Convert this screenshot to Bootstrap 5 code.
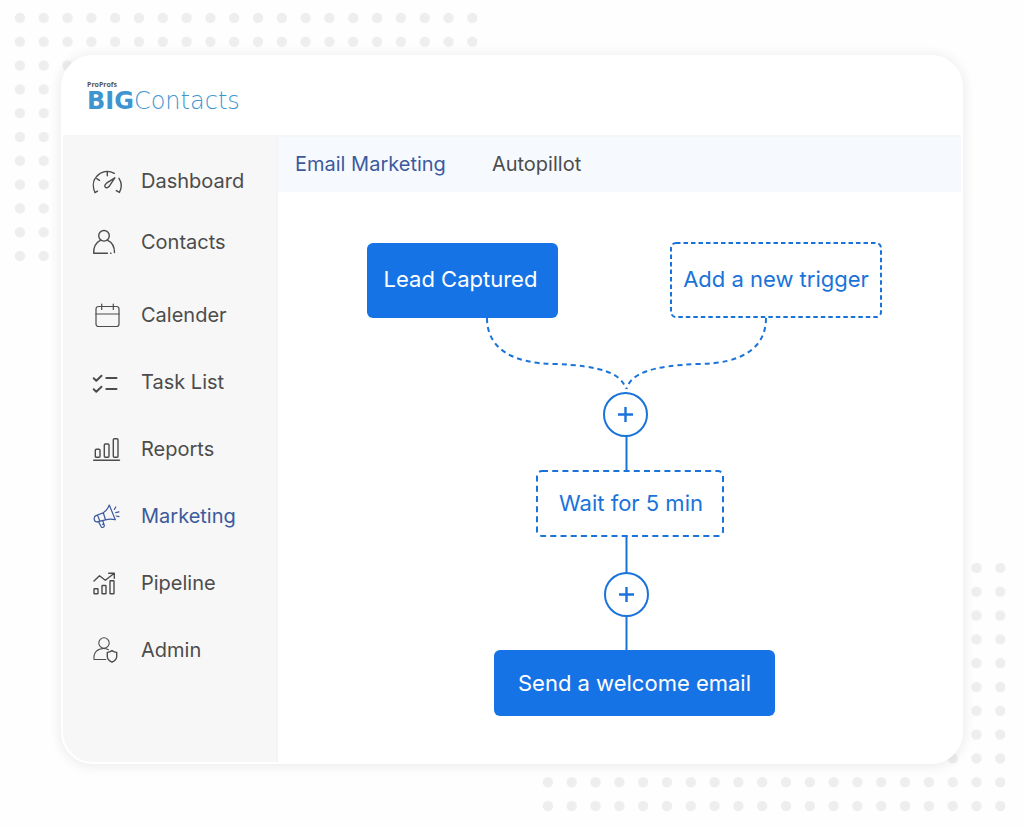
<!DOCTYPE html>
<html lang="en">
<head>
<meta charset="utf-8">
<meta name="viewport" content="width=device-width, initial-scale=1">
<title>BIGContacts</title>
<link href="https://cdn.jsdelivr.net/npm/bootstrap@5.3.0/dist/css/bootstrap.min.css" rel="stylesheet">
<style>
  body { font-family: Inter, "Liberation Sans", sans-serif; background: #fefefe; color: #4c4c4c; }
  .stage { padding: 55px 61px 64px; }
  .dot-grid { position: absolute; width: 476px; height: 262px; }
  .dots-start { top: 6px; left: 8px; }
  .dots-end { bottom: 10px; right: 12px; }
  .app-window { border: 2px solid #fff; border-radius: 32px; background: #fff; box-shadow: 0 1px 12px 2px rgba(0,0,0,.07); }
  .app-header { height: 80px; padding: 24px; border-bottom: 2px solid #f6f6f6; }
  .brand { color: #3f95cf; }
  .brand-owner { font: 700 7px/8px "Open Sans", sans-serif; color: #555; }
  .brand-name { font: 200 24px/24px "DejaVu Sans", sans-serif; }
  .brand-name b { font-weight: 700; }
  .sidebar { width: 215px; background: #f7f7f7; border-right: 2px solid #f4f4f4; padding: 14px 0 32px 28px; }
  .side-link { display: flex; align-items: center; gap: 18px; padding: 14px 0 15px; font-size: 20px; line-height: 32px; color: inherit; text-decoration: none; }
  .side-records { padding-top: 9px; }
  .side-records .side-link { padding: 17px 0 18px; }
  .side-link.active, .tab-link.active { color: #3c5a9c; }
  .side-link svg { width: 32px; height: 32px; flex: none; fill: none; stroke: currentColor; stroke-width: 1.4; stroke-linecap: round; stroke-linejoin: round; }
  .tab-strip { height: 55px; padding: 0 0 2px 17px; gap: 46px; background: #f6faff; }
  .tab-link { color: inherit; text-decoration: none; font-size: 20px; line-height: 30px; }
  .canvas { padding: 51px 0 45px 10px; }
  .flow { position: relative; width: 515px; height: 474px; color: #1a73d9; }
  .flow-lines { position: absolute; inset: 0; width: 100%; height: 100%; overflow: visible; fill: none; stroke: currentColor; stroke-width: 2; }
  .node { position: absolute; border: 0; padding: 0; background: transparent; color: inherit; font-size: 22px; line-height: 32px; white-space: nowrap; border-radius: 6px; }
  .node-solid { background: #1673e6; color: #fff; }
  .node-add { width: 45px; height: 45px; border: 2px solid; border-radius: 50%; display: grid; place-items: center; background: #fff; }
  .node-add svg { width: 17px; height: 17px; stroke: currentColor; stroke-width: 2.4; }
  .at-lead { left: 0; top: 0; width: 191px; height: 75px; padding: 0 4px 4px 0; }
  .at-trigger { left: 303px; top: 0; width: 212px; height: 75px; padding-bottom: 4px; }
  .at-add-first { left: 236px; top: 149px; }
  .at-wait { left: 170px; top: 227px; width: 188px; height: 66px; }
  .at-add-second { left: 237px; top: 329px; }
  .at-send { left: 127px; top: 407px; width: 281px; height: 66px; }
</style>
</head>
<body>
<div class="stage position-relative min-vh-100 d-flex">
  <svg class="dot-grid dots-start" viewBox="0 0 476 262" aria-hidden="true">
    <defs><pattern id="dots" width="23.81" height="23.81" patternUnits="userSpaceOnUse"><circle cx="11.9" cy="11.9" r="5.2" fill="#eee"/></pattern></defs>
    <rect width="476" height="262" fill="url(#dots)"/>
  </svg>
  <svg class="dot-grid dots-end" viewBox="0 0 476 262" aria-hidden="true"><rect width="476" height="262" fill="url(#dots)"/></svg>

  <div class="app-window position-relative flex-grow-1 d-flex flex-column overflow-hidden">
    <header class="app-header">
      <div class="brand">
        <div class="brand-owner">ProProfs</div>
        <div class="brand-name"><b>BIG</b>Contacts</div>
      </div>
    </header>
    <div class="d-flex flex-grow-1">
      <nav class="sidebar flex-shrink-0" aria-label="Main">
        <div>
          <a class="side-link" href="#"><svg viewBox="0 0 32 32" aria-hidden="true"><path d="M6.5 26.2 4 27.6C1.5 22 1.8 15.500 5.600 11.500C10 6.300 17 4.800 23.300 8.300M28 13.300C30.800 17.500 31 22.500 28.400 27.400L25.300 25.600M5.800 13.700l2.700 1.600M16.300 7v3.800M23.800 12.800 15.500 18.200C11.800 21.200 15 24.600 18 21.600Z"/></svg>Dashboard</a>
          <a class="side-link" href="#"><svg viewBox="0 0 32 32" aria-hidden="true"><circle cx="13" cy="9.800" r="5.300"/><path d="M9.300 14.300C5 16.500 2.400 20.500 2.700 27.300H16.500M19.700 27.300h.3M23.500 26.500C23.500 20.500 21.500 16.500 16.700 14.300"/></svg>Contacts</a>
        </div>
        <div class="side-records">
          <a class="side-link" href="#"><svg viewBox="0 0 32 32" aria-hidden="true"><g stroke-width="1.200"><rect x="5" y="7.500" width="23" height="20" rx="2.500"/><path d="M5 15H28M10.700 5v5.500M22.300 5v5.500"/></g></svg>Calender</a>
          <a class="side-link" href="#"><svg viewBox="0 0 32 32" aria-hidden="true"><path stroke-width="2" d="M2.700 12.200 5.300 14.700 10.500 9.700M2.700 23.200 5.300 25.700 10.500 20.700M15.300 12H25.500M15.300 23H25.500"/></svg>Task List</a>
          <a class="side-link" href="#"><svg viewBox="0 0 32 32" aria-hidden="true"><path d="M2.700 27.200H28.500"/><rect x="4.300" y="16.300" width="4.700" height="8" rx="1"/><rect x="13.300" y="11" width="4.700" height="13.300" rx="1"/><rect x="22.300" y="5.800" width="4.700" height="18.500" rx="1"/></svg>Reports</a>
          <a class="side-link active" aria-current="page" href="#"><svg viewBox="0 0 32 32" aria-hidden="true"><g stroke-width="1.200"><path d="M18.300 5 24.300 19.800C21 18.800 18 18.800 14.500 19.800L12.300 12.700C15 11 17 8.500 18.300 5ZM12.300 12.700 5 15.600C2 17 3 22 6 21.800L14.500 19.800M6.500 15.200 9 21.200M7.500 21.600 10.300 27C11.500 28 13.500 27.300 13.300 25.500L11.800 20.700M11.500 24.300h1.300M23.300 9.300 24.800 7M24.700 12.700 28 11.800M25.300 16 28 16.700"/></g></svg>Marketing</a>
          <a class="side-link" href="#"><svg viewBox="0 0 32 32" aria-hidden="true"><path d="M3 14 8.500 8.800 14.300 13.200 23 6.500M17.700 6.300H23.300V11.300"/><rect x="3" y="21.800" width="4" height="5" rx=".5"/><rect x="11" y="18.500" width="4" height="8.300" rx=".5"/><rect x="19" y="13.800" width="4" height="13" rx=".5"/></svg>Pipeline</a>
          <a class="side-link" href="#"><svg viewBox="0 0 32 32" aria-hidden="true"><g stroke-width="1.100"><circle cx="13" cy="9" r="5.200"/><path d="M14.800 25.500H3C2.300 18 7 14.500 12.500 14.500C14.500 14.500 16 14.900 17.500 15.700"/></g><path d="M21 16.500C19.500 17.800 18 18.300 16.300 18.400V22.500C16.300 25 18.500 27 21 28.200C23.500 27 25.700 25 25.700 22.500V18.400C24 18.300 22.500 17.800 21 16.500Z"/></svg>Admin</a>
        </div>
      </nav>
      <main class="flex-grow-1">
        <nav class="tab-strip d-flex align-items-center" aria-label="Marketing">
          <a class="tab-link active" aria-current="page" href="#">Email Marketing</a>
          <a class="tab-link" href="#">Autopillot</a>
        </nav>
        <section class="canvas" aria-label="Workflow">
          <div class="flow mx-auto">
            <svg class="flow-lines" viewBox="0 0 515 474" aria-hidden="true">
              <rect x="304" y="0" width="210" height="74" rx="5" stroke-dasharray="4.500 3"/>
              <rect x="170" y="228" width="186" height="65" rx="5" stroke-dasharray="6 4.200"/>
              <path stroke-dasharray="5 4" d="M120 75C120 105 145 121 189 121C234 123 254 130 259 146M399 75C399 105 375 121 330 121C285 123 264 130 259.500 146"/>
              <path d="M259.500 193V228M259.500 293V331M259.500 373V408"/>
            </svg>
            <button type="button" class="node node-solid at-lead">Lead Captured</button>
            <button type="button" class="node at-trigger">Add a new trigger</button>
            <button type="button" class="node node-add at-add-first" aria-label="Add step"><svg viewBox="0 0 17 17"><path d="M8.500 1V16M1 8.500H16"/></svg></button>
            <button type="button" class="node at-wait">Wait for 5 min</button>
            <button type="button" class="node node-add at-add-second" aria-label="Add step"><svg viewBox="0 0 17 17"><path d="M8.500 1V16M1 8.500H16"/></svg></button>
            <button type="button" class="node node-solid at-send">Send a welcome email</button>
          </div>
        </section>
      </main>
    </div>
  </div>
</div>
<script src="https://cdn.jsdelivr.net/npm/bootstrap@5.3.0/dist/js/bootstrap.bundle.min.js"></script>
</body>
</html>
